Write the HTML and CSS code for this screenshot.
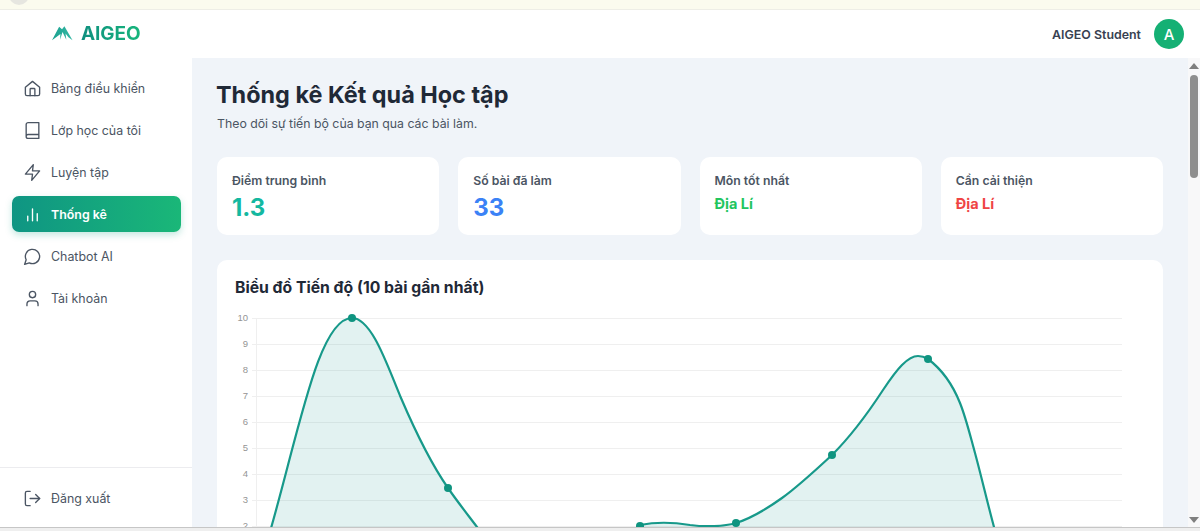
FILE: index.html
```html
<!DOCTYPE html>
<html lang="vi">
<head>
<meta charset="utf-8">
<title>AIGEO - Thống kê</title>
<link rel="stylesheet" href="styles.css">
</head>
<body>
<div class="notice"><span class="notice-dot"></span></div>
<header class="header">
  <div class="brand">
    <svg class="brand-mark" viewBox="0 0 22 16" aria-hidden="true">
      <defs><linearGradient id="lg" x1="0" y1="0" x2="1" y2="0"><stop offset="0" stop-color="#19a08f"/><stop offset="1" stop-color="#35b8a4"/></linearGradient></defs>
      <path d="M0 15.5 L7.5 1.5 L10.5 4 L13 0.8 L21.5 15.5 L17.2 12.5 L14.2 8.5 L15 15 L11 7 L8.5 15 L8.8 9 L5 12 Z" fill="url(#lg)"/>
    </svg>
    <span class="brand-name">AIGEO</span>
  </div>
  <div class="user">
    <span class="user-name">AIGEO Student</span>
    <span class="avatar">A</span>
  </div>
</header>
<div class="layout">
  <aside class="sidebar">
    <nav class="nav">
      <a class="nav-item"><svg class="icon" viewBox="0 0 24 24"><path d="M3 10.5 12 3l9 7.5V19a2 2 0 0 1-2 2H5a2 2 0 0 1-2-2z"/><path d="M9 21v-8a1 1 0 0 1 1-1h4a1 1 0 0 1 1 1v8"/></svg>Bảng điều khiển</a>
      <a class="nav-item"><svg class="icon" viewBox="0 0 24 24"><path d="M4 19.5v-15A2.5 2.5 0 0 1 6.5 2H20v20H6.5a2.5 2.5 0 0 1 0-5H20"/></svg>Lớp học của tôi</a>
      <a class="nav-item"><svg class="icon" viewBox="0 0 24 24"><path d="M13 2 3 14h9l-1 8 10-12h-9z"/></svg>Luyện tập</a>
      <a class="nav-item active"><svg class="icon" viewBox="0 0 24 24"><path d="M6 20v-6"/><path d="M12 20V5"/><path d="M18 20v-9"/></svg>Thống kê</a>
      <a class="nav-item"><svg class="icon" viewBox="0 0 24 24"><path d="M7.9 20A9 9 0 1 0 4 16.1L2 22z"/></svg>Chatbot AI</a>
      <a class="nav-item"><svg class="icon" viewBox="0 0 24 24"><path d="M19 21v-2a4 4 0 0 0-4-4H9a4 4 0 0 0-4 4v2"/><circle cx="12" cy="7" r="4"/></svg>Tài khoản</a>
    </nav>
    <div class="logout">
      <a class="nav-item"><svg class="icon" viewBox="0 0 24 24"><path d="M9 21H5a2 2 0 0 1-2-2V5a2 2 0 0 1 2-2h4"/><path d="m16 17 5-5-5-5"/><path d="M21 12H9"/></svg>Đăng xuất</a>
    </div>
  </aside>
  <main class="main">
    <h1 class="title">Thống kê Kết quả Học tập</h1>
    <p class="subtitle">Theo dõi sự tiến bộ của bạn qua các bài làm.</p>
    <section class="stats">
      <div class="stat"><div class="stat-label">Điểm trung bình</div><div class="stat-value teal">1.3</div></div>
      <div class="stat"><div class="stat-label">Số bài đã làm</div><div class="stat-value blue">33</div></div>
      <div class="stat"><div class="stat-label">Môn tốt nhất</div><div class="stat-text green">Địa Lí</div></div>
      <div class="stat"><div class="stat-label">Cần cải thiện</div><div class="stat-text red">Địa Lí</div></div>
    </section>
    <section class="chart-card">
      <h2 class="chart-title">Biểu đồ Tiến độ (10 bài gần nhất)</h2>
      <svg class="chart" viewBox="235 308 910 290" aria-label="Biểu đồ tiến độ">
        <g class="grid">
          <path d="M252 318.5H1122M252 344.5H1122M252 370.5H1122M252 396.5H1122M252 422.5H1122M252 448.5H1122M252 474.5H1122M252 500.5H1122M252 526.5H1122"/>
          <path d="M256.5 318V578"/>
        </g>
        <g class="ticks">
          <text x="248" y="321">10</text><text x="248" y="347">9</text><text x="248" y="373">8</text><text x="248" y="399">7</text><text x="248" y="425">6</text><text x="248" y="451">5</text><text x="248" y="477">4</text><text x="248" y="503">3</text><text x="248" y="529">2</text>
        </g>
        <path class="area" d="M256 578C294 464 314 318 352 318C372 318 388 367.5 401 398C416 433 432 465 448 488C458 502.5 468 515 477 527L540 578H610L640 525C655 522 672 522 690 525C705 527 724 526.6 736 523C752 518 768 508 782 498C796 488 818 468 832 455C850 437 868 413 883 390C891 378 896 371 902 365C908 359 913 356 918 356C922 356 924 356.6 928 359C936 365 950 378 960 403C966 418 970 435 975 453C981 475 988 505 994 527L1006 578Z"/>
        <path class="line" d="M256 578C294 464 314 318 352 318C372 318 388 367.5 401 398C416 433 432 465 448 488C458 502.5 468 515 477 527L500 560M620 560L640 525C655 522 672 522 690 525C705 527 724 526.6 736 523C752 518 768 508 782 498C796 488 818 468 832 455C850 437 868 413 883 390C891 378 896 371 902 365C908 359 913 356 918 356C922 356 924 356.6 928 359C936 365 950 378 960 403C966 418 970 435 975 453C981 475 988 505 994 527L1006 578"/>
        <g class="points">
          <circle cx="352" cy="318" r="4"/><circle cx="448" cy="488" r="4"/><circle cx="640" cy="526" r="4"/><circle cx="736" cy="523" r="4"/><circle cx="832" cy="455" r="4"/><circle cx="928" cy="359" r="4"/>
        </g>
      </svg>
    </section>
  </main>
  <div class="scrollbar">
    <span class="arrow up"></span>
    <span class="thumb"></span>
    <span class="arrow down"></span>
  </div>
</div>
<div class="window-edge"></div>
</body>
</html>
```
FILE: styles.css
```css
* { box-sizing: border-box; }
html, body { margin: 0; height: 531px; overflow: hidden; }
body {
  display: flex;
  flex-direction: column;
  background: #fff;
  font-family: Inter, "Noto Sans", "Liberation Sans", sans-serif;
  color: #1f2937;
}
.notice {
  position: relative;
  flex: 0 0 10px;
  background: #fbfbee;
  border-bottom: 1px solid #eeeee6;
  overflow: hidden;
}
.notice-dot {
  position: absolute;
  left: 9px;
  top: -15px;
  width: 20px;
  height: 20px;
  border-radius: 50%;
  background: #e6e6e0;
}
.header {
  flex: 0 0 48px;
  display: flex;
  align-items: center;
  justify-content: space-between;
  padding: 0 16px 0 52px;
  background: #fff;
}
.brand { display: flex; align-items: center; gap: 9px; margin-bottom: 2px; }
.brand-mark { width: 21px; height: 16px; display: block; }
.brand-name {
  font-size: 19px;
  font-weight: 700;
  letter-spacing: -0.1px;
  margin-left: -1px;
  background: linear-gradient(90deg, #0f8f7f, #17b57c);
  -webkit-background-clip: text;
  background-clip: text;
  color: transparent;
}
.user { display: flex; align-items: center; gap: 13px; }
.user-name { font-size: 12.4px; font-weight: 600; color: #374151; }
.avatar {
  width: 30px;
  height: 30px;
  border-radius: 50%;
  background: #15b074;
  color: #fff;
  font-size: 15px;
  font-weight: 500;
  display: flex;
  align-items: center;
  justify-content: center;
}
.layout { flex: 1 1 0; min-height: 0; display: flex; }
.sidebar {
  flex: 0 0 192px;
  display: flex;
  flex-direction: column;
  justify-content: space-between;
  background: #fff;
}
.nav {
  display: flex;
  flex-direction: column;
  gap: 6px;
  padding: 12px 11px 0 12px;
}
.nav-item {
  height: 36px;
  display: flex;
  align-items: center;
  gap: 9px;
  padding: 0 11px;
  border-radius: 7px;
  font-size: 12.4px;
  color: #4b5563;
}
.nav-item.active {
  background: linear-gradient(90deg, #0f9583, #1ab778);
  color: #fff;
  font-weight: 600;
  box-shadow: 0 3px 7px rgba(16, 160, 130, 0.25);
}
.icon {
  flex: 0 0 19px;
  width: 19px;
  height: 19px;
  fill: none;
  stroke: currentColor;
  stroke-width: 1.7;
  stroke-linecap: round;
  stroke-linejoin: round;
}
.logout { border-top: 1px solid #ececef; padding: 12px 11px 0 12px; height: 60px; }
.main {
  flex: 1 1 0;
  min-width: 0;
  overflow: hidden;
  padding: 23px 25px 0;
  background: #f0f4f9;
}
.title { margin: 0 0 0 -1px; font-size: 23.4px; line-height: 28px; font-weight: 700; color: #1f2937; }
.subtitle { margin: 7px 0 0; font-size: 12.3px; line-height: 16px; color: #4b5563; }
.stats {
  display: grid;
  grid-template-columns: repeat(4, 1fr);
  gap: 19px;
  margin-top: 25px;
}
.stat {
  height: 78px;
  padding: 16px 15px;
  background: #fff;
  border-radius: 10px;
}
.stat-label { font-size: 12.25px; line-height: 16px; font-weight: 600; color: #4b5563; }
.stat-value { font-size: 24px; line-height: 28px; font-weight: 700; margin-top: 5px; }
.stat-text { font-size: 14.5px; line-height: 20px; font-weight: 700; margin-top: 5px; }
.teal { color: #14b8a0; }
.blue { color: #3b82f6; }
.green { color: #22c55e; }
.red { color: #ef4444; }
.chart-card {
  margin-top: 25px;
  height: 340px;
  padding: 18px;
  background: #fff;
  border-radius: 10px;
}
.chart-title { margin: 0; font-size: 15.75px; line-height: 20px; font-weight: 700; color: #1f2937; }
.chart { display: block; width: 910px; height: 290px; margin-top: 10px; overflow: hidden; }
.grid path { fill: none; stroke: #efefef; stroke-width: 1; }
.ticks text {
  font-family: "Liberation Sans", sans-serif;
  font-size: 9.5px;
  fill: #949494;
  text-anchor: end;
}
.area { fill: rgba(13, 148, 136, 0.12); }
.line { fill: none; stroke: #17998a; stroke-width: 2.2; }
.points circle { fill: #0f9480; }
.scrollbar {
  flex: 0 0 12px;
  display: flex;
  flex-direction: column;
  align-items: center;
  background: #f8f8f9;
  padding-top: 5px;
}
.arrow { width: 0; height: 0; border-left: 5px solid transparent; border-right: 5px solid transparent; }
.arrow.up { border-bottom: 6px solid #7f7f7f; }
.arrow.down { border-top: 6px solid #7f7f7f; margin-top: auto; margin-bottom: 4px; }
.thumb { width: 8px; height: 103px; margin-top: 6px; border-radius: 4px; background: #8e8e8e; }
.window-edge { flex: 0 0 4px; background: #efefef; border-top: 1px solid #c6c6c6; }
```
